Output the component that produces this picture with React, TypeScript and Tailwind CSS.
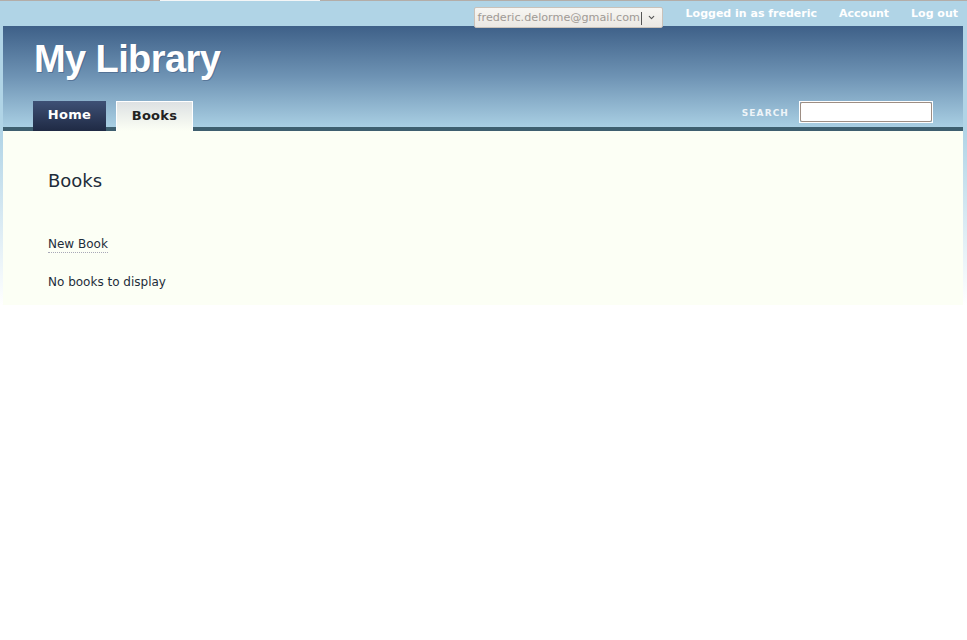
import { ChevronDown } from "lucide-react";

const font = "font-['DejaVu_Sans',Verdana,sans-serif]";

function AccountSelect() {
  return (
    <div className="relative flex items-center w-[189px] h-[21px] mt-[6px] border border-[#c9c2ba] rounded-[2px] bg-[linear-gradient(#f7f6f3,#ebe8e3)] pl-[3px] pr-[6px]">
      <span className="text-[11.2px] leading-none text-[#a09a95] whitespace-nowrap">
        frederic.delorme@gmail.com
      </span>
      <span className="absolute left-[166px] top-[4px] w-px h-[13px] bg-[#555]" />
      <ChevronDown className="ml-auto w-[9px] h-[9px] text-[#555]" strokeWidth={3} />
    </div>
  );
}

export default function App() {
  return (
    <div
      className={`min-h-screen ${font} bg-[linear-gradient(to_bottom,#b0d4e6_0px,#b0d4e6_130px,#ffffff_305px)]`}
    >
      <div className="flex h-px">
        <div className="w-[160px] bg-[#b3ada8]" />
        <div className="w-[160px] bg-[#f4f6f7]" />
        <div className="flex-1 bg-[#b3ada8]" />
      </div>

      <div className="w-[960px] ml-[3px]">
        {/* top bar */}
        <div className="h-[25px] flex items-start justify-end pr-[5px]">
          <AccountSelect />
          <div className="flex gap-[22px] ml-[23px] pt-[6px] text-[11px] leading-[14px] font-bold text-white">
            <a href="#">Logged in as frederic</a>
            <a href="#">Account</a>
            <a href="#">Log out</a>
          </div>
        </div>

        {/* header */}
        <header className="h-[105px] flex flex-col border-b-4 border-[#3e5f6f] bg-[linear-gradient(to_bottom,#3e6088,#6e93b4_50%,#a9cfe3)]">
          <h1 className="mt-[14px] ml-[31px] font-['Liberation_Sans',Arial,sans-serif] font-bold text-[38px] leading-[38px] tracking-[-0.6px] text-white [text-shadow:1px_1px_0_rgba(40,60,100,0.35)]">
            My Library
          </h1>
          <div className="mt-auto -mb-[4px] h-[30px] flex items-start justify-between px-[30px]">
            <nav className="flex gap-[10px] items-start">
              <a
                href="#"
                className="w-[73px] h-[30px] flex items-center justify-center pb-[2px] text-[13px] font-bold tracking-[0.3px] text-white bg-[linear-gradient(#3e5075,#1f2a44)]"
              >
                Home
              </a>
              <a
                href="#"
                className="w-[77px] h-[30px] flex items-center justify-center pb-[1px] text-[13px] font-bold tracking-[0.3px] text-[#222] border border-b-0 border-white bg-[linear-gradient(#dde1e3,#fcfff5)]"
              >
                Books
              </a>
            </nav>
            <div className="flex items-center gap-[10px]">
              <span className="pt-[3px] text-[9px] font-bold tracking-[1.1px] text-[#eef4f8]">SEARCH</span>
              <div className="border border-white">
                <input className="block w-[132px] h-[20px] bg-white border border-[#9d8e84] rounded-[2px] outline-none" />
              </div>
            </div>
          </div>
        </header>

        {/* content */}
        <main className="bg-[#fcfff5] h-[174px] pl-[45px] pt-[39px] text-[#1e2d3a]">
          <h2 className="text-[18px] leading-[22px]">Books</h2>
          <a
            href="#"
            className="inline-block mt-[44px] text-[12px] leading-[16px] border-b border-dotted border-[#a8a8b8]"
          >
            New Book
          </a>
          <p className="mt-[19px] text-[12px] leading-[16px]">No books to display</p>
        </main>
      </div>
    </div>
  );
}
